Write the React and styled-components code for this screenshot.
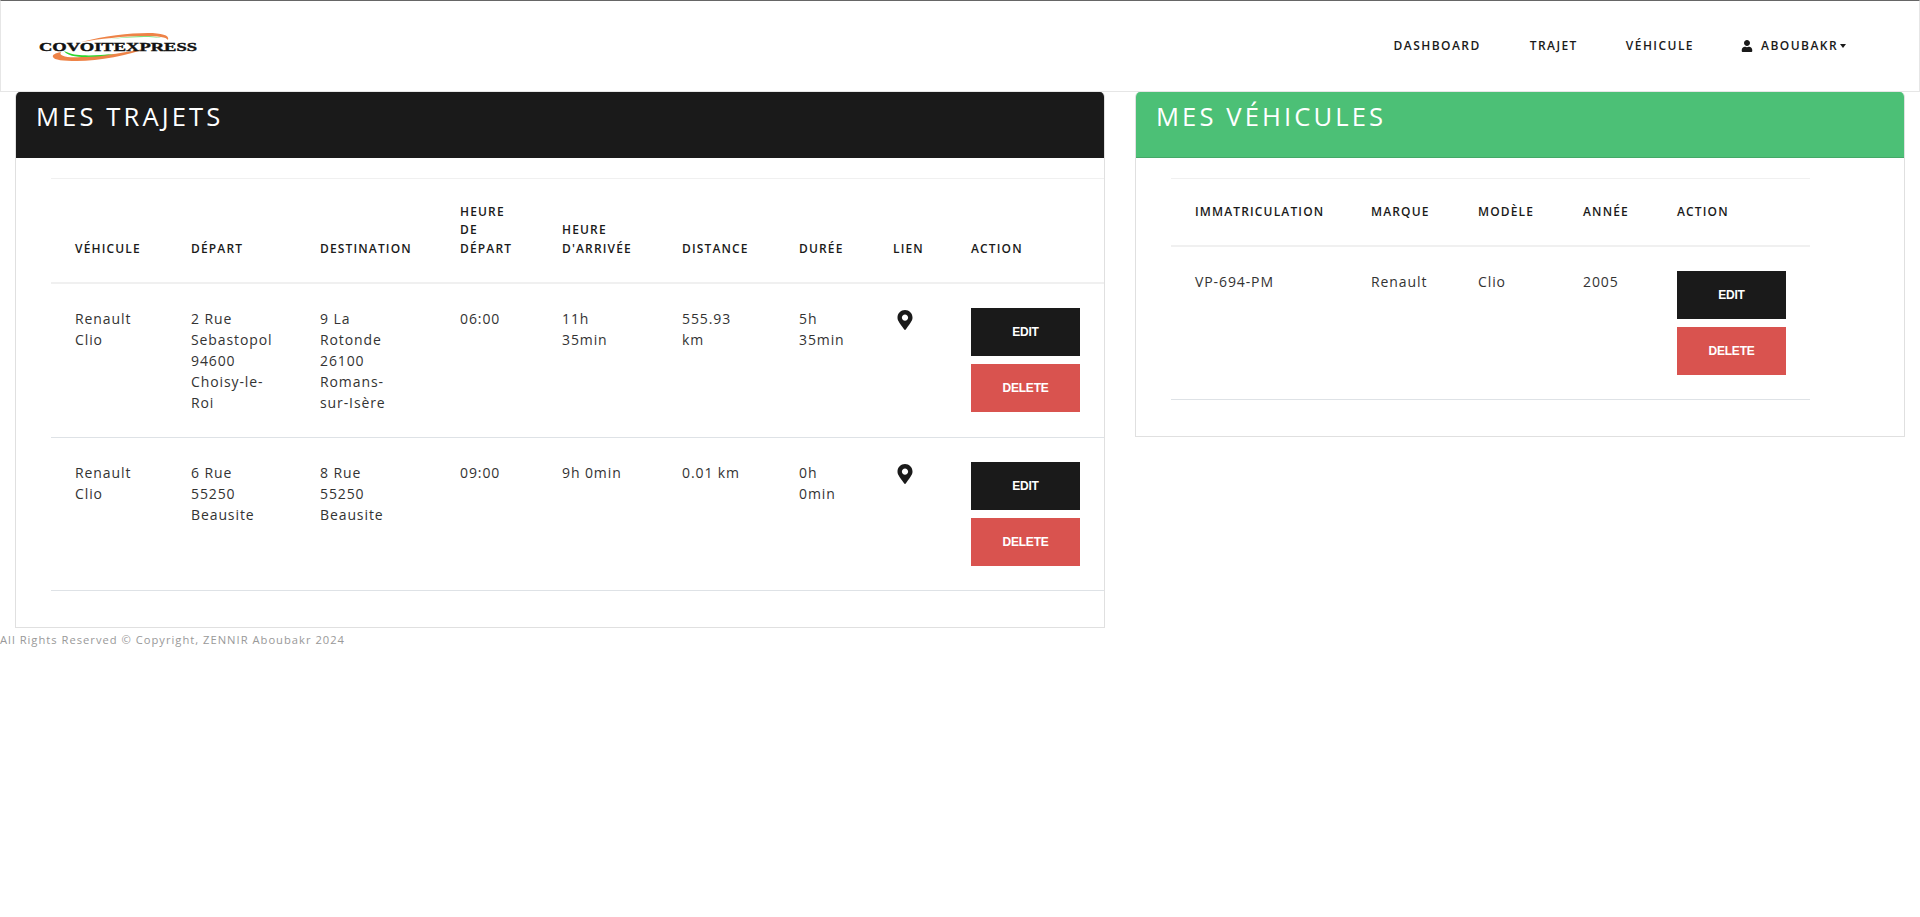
import React from 'react';
import styled, { createGlobalStyle } from 'styled-components';
import { FaUser, FaMapMarkerAlt } from 'react-icons/fa';

const Global = createGlobalStyle`
  * { box-sizing: border-box; }
  html, body { margin: 0; padding: 0; background: #fff; }
  body {
    font-family: "Open Sans", "Noto Sans", sans-serif;
    font-size: 14px;
    line-height: 21px;
    letter-spacing: 0.9px;
    color: #333;
  }
`;

const Nav = styled.nav`
  display: flex;
  align-items: center;
  height: 92px;
  padding: 0 73px 0 38px;
  border: 1px solid #e6e6e6;
  border-top: 1px solid #666;
`;

const NavLinks = styled.ul`
  display: flex;
  align-items: center;
  margin: 0 0 0 auto;
  padding: 0;
  list-style: none;
`;

const NavLink = styled.li`
  display: flex;
  align-items: center;
  padding: 0 24px;
  font-size: 12px;
  font-weight: 600;
  line-height: 18px;
  letter-spacing: 1.45px;
  color: #1a1a1a;
  text-transform: uppercase;

  &:first-child { padding-right: 25px; }
  &:last-child { padding: 0 0 0 23px; }
  svg { margin-right: 8px; }
`;

const Caret = styled.span`
  margin-left: 2px;
  border-top: 4px solid #1a1a1a;
  border-left: 3.5px solid transparent;
  border-right: 3.5px solid transparent;
`;

const Row = styled.div`
  display: grid;
  grid-template-columns: minmax(0, 7fr) minmax(0, 5fr);
  align-items: start;
`;

const Col = styled.div`
  padding: 0 15px;
`;

const Card = styled.section`
  border: 1px solid #e0e0e0;
  border-top: 0;
  border-radius: 5px 5px 0 0;
  overflow: hidden;
`;

const CardHead = styled.header`
  height: 66px;
  margin: 0 -1px;
  padding: 9px 21px;
  background: ${p => p.$bg};
  border-bottom: 1px solid ${p => p.$line};
`;

const Title = styled.h2`
  margin: 0;
  font-size: 25.6px;
  font-weight: 500;
  line-height: 32px;
  letter-spacing: 3.1px;
  color: #fff;
  text-transform: uppercase;
`;

const CardBody = styled.div`
  padding: 20px ${p => (p.$flush ? 0 : '34px')} 36px 35px;
`;

const Table = styled.table`
  width: ${p => p.$width}px;
  table-layout: fixed;
  border-collapse: collapse;
  border-top: 1px solid #f0f0f0;
  border-bottom: 1px solid #dee2e6;
`;

const Th = styled.th`
  padding: 24px;
  border-bottom: 2px solid #f0f0f0;
  font-size: 12px;
  font-weight: 600;
  line-height: 18.4px;
  letter-spacing: 1.15px;
  text-align: left;
  vertical-align: bottom;
  color: #1a1a1a;
  text-transform: uppercase;
`;

const Td = styled.td`
  padding: 24px 27px 24px 24px;
  border-top: 1px solid #dee2e6;
  vertical-align: top;

  tr:first-child > & { border-top: 0; }
`;

const Actions = styled.div`
  display: flex;
  flex-direction: column;
  gap: 8px;
  width: 109px;
`;

const Button = styled.button`
  height: 48px;
  padding: 0 0 1px;
  border: 0;
  background: ${p => (p.$danger ? '#d9534f' : '#1a1a1a')};
  font-family: "Liberation Sans", Arial, sans-serif;
  font-size: 12px;
  font-weight: 700;
  letter-spacing: -0.2px;
  color: #fff;
  text-transform: uppercase;
`;

const Footer = styled.footer`
  margin: 3px 0 0 -15px;
  font-size: 11.2px;
  line-height: 18px;
  letter-spacing: 1px;
  color: #999;
`;

const Pin = styled(FaMapMarkerAlt)`
  display: block;
  margin: 2px 0 0 2px;
  color: #1a1a1a;
`;

const Logo = () => (
  <svg width="160" height="30" viewBox="0 0 160 30">
    <path d="M42 11 C65 5 90 2 109 2 C122 2 131 4 129 9 C127 6 120 5 105 5 C85 5 60 8 42 11Z" fill="#ee8347" />
    <path d="M70 8 C90 5 115 4 122 7 C110 5 90 6 70 8Z" fill="#5bd85b" />
    <path d="M14 26 C13 24 16 22 22 21 C19 25 28 27 42 26 C65 25 90 21 109 17 C90 24 60 30 38 30 C24 30 15 29 14 26Z" fill="#ee8347" />
    <path d="M25 20 L30 22 C36 25 55 25 75 23 C55 27 30 28 25 20Z" fill="#2fd62f" />
    <text x="0" y="20" textLength="158" lengthAdjust="spacingAndGlyphs"
      fontFamily="Liberation Serif" fontWeight="700" fontSize="13" letterSpacing="0" stroke="#111" strokeWidth=".4" fill="#111">COVOITEXPRESS</text>
  </svg>
);

const trips = [
  {
    car: 'Renault Clio', from: '2 Rue Sebastopol 94600 Choisy-le-Roi', to: '9 La Rotonde 26100 Romans-sur-Isère',
    start: '06:00', end: '11h 35min', dist: '555.93 km', time: '5h 35min',
  },
  {
    car: 'Renault Clio', from: '6 Rue 55250 Beausite', to: '8 Rue 55250 Beausite',
    start: '09:00', end: '9h 0min', dist: '0.01 km', time: '0h 0min',
  },
];

const tripCols = [
  ['Véhicule', 116], ['Départ', 129], ['Destination', 140], ['Heure de départ', 102], ['Heure d\'arrivée', 120],
  ['Distance', 117], ['Durée', 94], ['Lien', 78], ['Action', 158],
];
const carCols = [['Immatriculation', 176], ['Marque', 107], ['Modèle', 105], ['Année', 94], ['Action', 157]];

const Buttons = () => (
  <Actions>
    <Button>Edit</Button>
    <Button $danger>Delete</Button>
  </Actions>
);

const Head = ({ cols }) => (
  <>
    <colgroup>{cols.map(([name, w]) => <col key={name} width={w} />)}</colgroup>
    <thead><tr>{cols.map(([name]) => <Th key={name}>{name}</Th>)}</tr></thead>
  </>
);

export default function App() {
  return (
    <>
      <Global />
      <Nav>
        <Logo />
        <NavLinks>
          <NavLink>Dashboard</NavLink>
          <NavLink>Trajet</NavLink>
          <NavLink>Véhicule</NavLink>
          <NavLink><FaUser size={12} />Aboubakr<Caret /></NavLink>
        </NavLinks>
      </Nav>
      <Row>
        <Col>
          <Card>
            <CardHead $bg="#1a1a1a" $line="#1a1a1a"><Title>Mes trajets</Title></CardHead>
            <CardBody $flush>
              <Table $width={1054}>
                <Head cols={tripCols} />
                <tbody>
                  {trips.map(t => (
                    <tr key={t.from}>
                      <Td>{t.car}</Td>
                      <Td>{t.from}</Td>
                      <Td>{t.to}</Td>
                      <Td>{t.start}</Td>
                      <Td>{t.end}</Td>
                      <Td>{t.dist}</Td>
                      <Td>{t.time}</Td>
                      <Td><Pin size={20} /></Td>
                      <Td><Buttons /></Td>
                    </tr>
                  ))}
                </tbody>
              </Table>
            </CardBody>
          </Card>
          <Footer>All Rights Reserved © Copyright, ZENNIR Aboubakr 2024</Footer>
        </Col>
        <Col>
          <Card>
            <CardHead $bg="#4cc076" $line="#45a868"><Title>Mes véhicules</Title></CardHead>
            <CardBody>
              <Table $width={639}>
                <Head cols={carCols} />
                <tbody>
                  <tr>
                    <Td>VP-694-PM</Td>
                    <Td>Renault</Td>
                    <Td>Clio</Td>
                    <Td>2005</Td>
                    <Td><Buttons /></Td>
                  </tr>
                </tbody>
              </Table>
            </CardBody>
          </Card>
        </Col>
      </Row>
    </>
  );
}
